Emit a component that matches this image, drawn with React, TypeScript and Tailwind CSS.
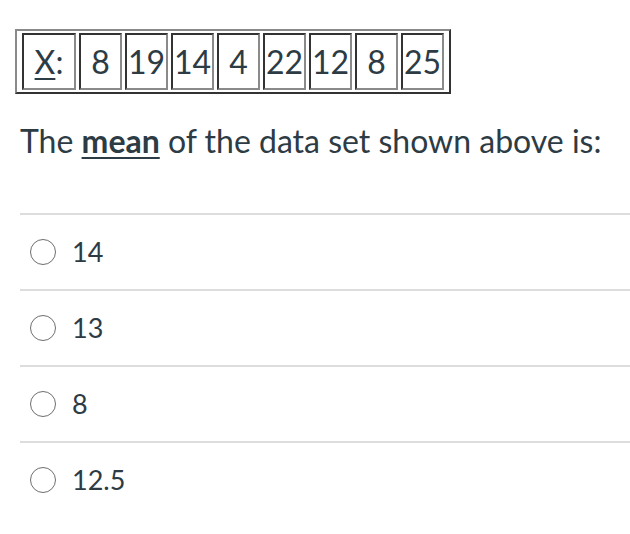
import { useState } from 'react';

const values = [8, 19, 14, 4, 22, 12, 8, 25];
const options = ['14', '13', '8', '12.5'];

// old-school html table with outset / inset bevel borders
const cellClass =
  'border-2 border-t-[#333] border-l-[#333] border-b-[#8a8a8a] border-r-[#8a8a8a] text-center align-middle p-0 h-[57px]';

export default function App() {
  const [picked, setPicked] = useState<string | null>(null);

  return (
    <div
      className="w-[630px] h-[534px] bg-white text-[#2d3b45] overflow-hidden"
      style={{ fontFamily: 'Lato, "Noto Sans", sans-serif' }}
    >
      <div className="pl-[15px] pt-[29px]">
        <table className="border-separate border-spacing-x-[3px] border-spacing-y-[2px] px-[2px] py-0 border-2 border-t-[#8a8a8a] border-l-[#8a8a8a] border-b-[#333] border-r-[#333] text-[32px] leading-none">
          <tbody>
            <tr>
              <td className={`${cellClass} w-[54px]`}>
                <span className="underline decoration-2 underline-offset-4">X</span>:
              </td>
              {values.map((v, i) => (
                <td key={i} className={`${cellClass} w-[43px]`}>
                  {v}
                </td>
              ))}
            </tr>
          </tbody>
        </table>
      </div>

      <p className="pl-[20px] mt-[27px] text-[32px] leading-[40px]">
        The <strong className="font-bold underline decoration-2 underline-offset-4">mean</strong> of
        the data set shown above is:
      </p>

      <div className="ml-[20px] mt-[52px]">
        {options.map((opt) => (
          <label
            key={opt}
            className="flex items-center h-[76px] border-t-2 border-[#ddd] cursor-pointer"
            onClick={() => setPicked(opt)}
          >
            <span className="ml-[10px] w-[26px] h-[26px] rounded-full border-[1.5px] border-[#6e6e6e] flex items-center justify-center">
              {picked === opt && <span className="w-[13px] h-[13px] rounded-full bg-[#2d3b45]" />}
            </span>
            <span className="ml-[16px] text-[27px]">{opt}</span>
          </label>
        ))}
      </div>
    </div>
  );
}
